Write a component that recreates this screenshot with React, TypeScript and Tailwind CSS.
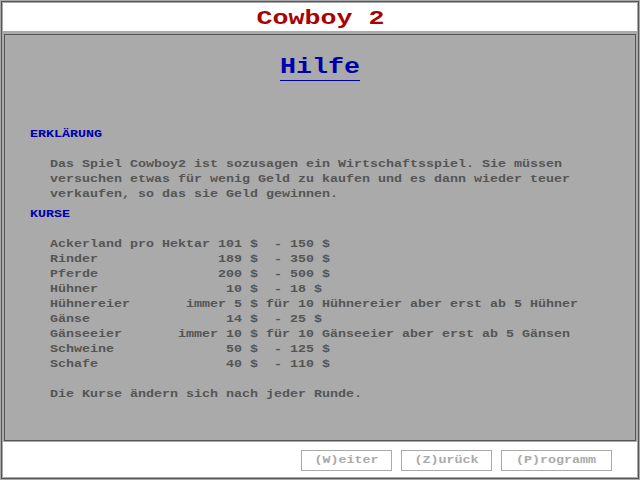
import React from "react";

const body =
  "self-start font-['Liberation_Mono',monospace] text-[11px] leading-[15px] font-bold text-[#555555] whitespace-pre origin-left scale-x-[1.2121]";
const head =
  "self-start font-['Liberation_Mono',monospace] text-[11px] leading-[15px] font-bold text-[#0000aa] whitespace-pre origin-left scale-x-[1.2121]";

const table = [
  "Ackerland pro Hektar 101 $  - 150 $",
  "Rinder               189 $  - 350 $",
  "Pferde               200 $  - 500 $",
  "Hühner                10 $  - 18 $",
  "Hühnereier       immer 5 $ für 10 Hühnereier aber erst ab 5 Hühner",
  "Gänse                 14 $  - 25 $",
  "Gänseeier       immer 10 $ für 10 Gänseeier aber erst ab 5 Gänsen",
  "Schweine              50 $  - 125 $",
  "Schafe                40 $  - 110 $",
];

function Btn({ label, w }: { label: string; w: string }) {
  return (
    <div
      className={`${w} h-[21px] border border-[#aaaaaa] bg-white flex items-center justify-center`}
    >
      <span className="font-['Liberation_Mono',monospace] text-[11px] leading-[19px] font-bold text-[#aaaaaa] whitespace-pre scale-x-[1.2121]">
        {label}
      </span>
    </div>
  );
}

export default function App() {
  return (
    <div className="w-[640px] h-[480px] bg-[#aaaaaa] p-px overflow-hidden">
      <div className="w-full h-full border border-[#555555] p-px flex flex-col">
        <div className="h-[28px] bg-white flex justify-center pt-[5px]">
          <div className="font-['Liberation_Mono',monospace] text-[21px] leading-[21px] font-bold text-[#aa0000] whitespace-pre scale-x-[1.27]">
            Cowboy 2
          </div>
        </div>
        <div className="h-[411px] bg-[#aaaaaa] pt-[3px] px-px pb-px">
          <div className="h-full border border-[#555555] bg-[#aaaaaa] flex flex-col pl-[25px] pt-[22px]">
            <div className="flex justify-center pr-[25px]">
              <div className="font-['Liberation_Mono',monospace] text-[22px] leading-[22px] font-bold text-[#0000aa] border-b border-[#0000aa] pb-px scale-x-[1.2121]">
                Hilfe
              </div>
            </div>
            <div className={`${head} mt-[46px]`}>ERKLÄRUNG</div>
            <div className={`${body} mt-[15px] ml-[20px]`}>
              <div>Das Spiel Cowboy2 ist sozusagen ein Wirtschaftsspiel. Sie müssen</div>
              <div>versuchen etwas für wenig Geld zu kaufen und es dann wieder teuer</div>
              <div>verkaufen, so das sie Geld gewinnen.</div>
            </div>
            <div className={`${head} mt-[5px]`}>KURSE</div>
            <div className={`${body} mt-[15px] ml-[20px]`}>
              {table.map((l, i) => (
                <div key={i}>{l}</div>
              ))}
            </div>
            <div className={`${body} mt-[15px] ml-[20px]`}>
              Die Kurse ändern sich nach jeder Runde.
            </div>
          </div>
        </div>
        <div className="flex-1 bg-white flex justify-end items-start pt-[8px] pr-[25px] gap-[9px]">
          <Btn label="(W)eiter" w="w-[91px]" />
          <Btn label="(Z)urück" w="w-[91px]" />
          <Btn label="(P)rogramm" w="w-[111px]" />
        </div>
      </div>
    </div>
  );
}
